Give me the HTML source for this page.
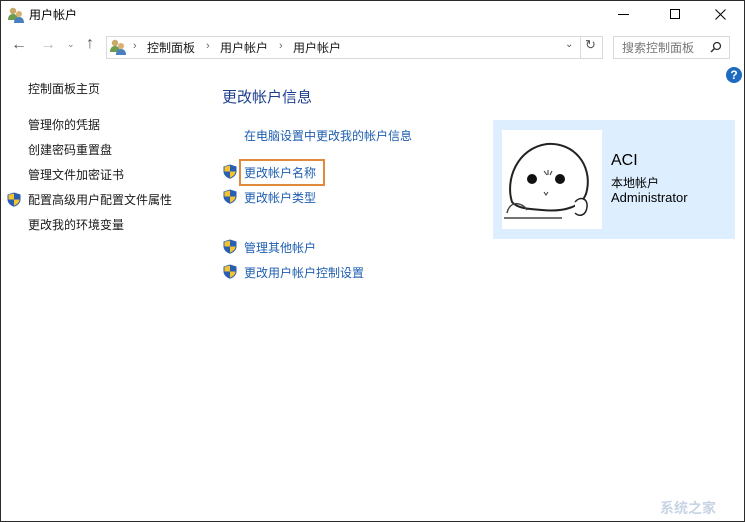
<!DOCTYPE html>
<html><head><meta charset="utf-8"><style>
*{margin:0;padding:0;box-sizing:border-box}
body{width:745px;height:522px;overflow:hidden;background:#fff;font-family:"Liberation Sans","Noto Sans CJK SC",sans-serif;position:relative}
.a{position:absolute;white-space:nowrap}
.lk{color:#1e5eb0;font-size:12px}
.nav{color:#1a1a1a;font-size:12px}
.sh{position:absolute;width:14px;height:15px}
</style></head><body>
<div class="a" style="left:0;top:0;width:745px;height:522px;border:1px solid #2b2b2b"></div>
<svg class="a" style="left:7px;top:6px" width="18" height="18" viewBox="0 0 18 18"><circle cx="6" cy="5" r="3.2" fill="#c9a86a"/><path d="M1 14c0-4 2-6 5-6s5 2 5 6z" fill="#6e9b4e"/><circle cx="12" cy="8" r="3" fill="#d8b070"/><path d="M7 17c0-4 2-6 5-6s5 2 5 6z" fill="#4a7fc0"/></svg>
<div class="a" style="left:29px;top:6px;font-size:12px;color:#000">用户帐户</div>
<div class="a" style="left:618px;top:14px;width:11px;height:1px;background:#000"></div>
<div class="a" style="left:670px;top:9px;width:10px;height:10px;border:1px solid #000"></div>
<svg class="a" style="left:715px;top:9px" width="11" height="11"><path d="M0.5 0.5L10.5 10.5M10.5 0.5L0.5 10.5" stroke="#000"/></svg>
<div class="a" style="left:11px;top:36px;font-size:16px;color:#555">←</div>
<div class="a" style="left:40px;top:36px;font-size:16px;color:#bbb">→</div>
<div class="a" style="left:67px;top:39px;font-size:9px;color:#777">⌄</div>
<div class="a" style="left:86px;top:35px;font-size:16px;color:#555">↑</div>
<div class="a" style="left:106px;top:36px;width:475px;height:23px;border:1px solid #d9d9d9"></div>
<div class="a" style="left:580px;top:36px;width:23px;height:23px;border:1px solid #d9d9d9"></div>
<div class="a" style="left:565px;top:39px;font-size:10px;color:#555">⌄</div>
<div class="a" style="left:585px;top:37px;font-size:13px;color:#555">↻</div>
<svg class="a" style="left:109px;top:38px" width="18" height="18" viewBox="0 0 18 18"><circle cx="6" cy="5" r="3.2" fill="#c9a86a"/><path d="M1 14c0-4 2-6 5-6s5 2 5 6z" fill="#6e9b4e"/><circle cx="12" cy="8" r="3" fill="#d8b070"/><path d="M7 17c0-4 2-6 5-6s5 2 5 6z" fill="#4a7fc0"/></svg>
<div class="a" style="left:133px;top:40px;font-size:11px;color:#666">›</div>
<div class="a nav" style="left:147px;top:39px">控制面板</div>
<div class="a" style="left:206px;top:40px;font-size:11px;color:#666">›</div>
<div class="a nav" style="left:220px;top:39px">用户帐户</div>
<div class="a" style="left:279px;top:40px;font-size:11px;color:#666">›</div>
<div class="a nav" style="left:293px;top:39px">用户帐户</div>
<div class="a" style="left:613px;top:36px;width:117px;height:23px;border:1px solid #d9d9d9"></div>
<div class="a" style="left:622px;top:39px;font-size:12px;color:#777">搜索控制面板</div>
<svg class="a" style="left:710px;top:41px" width="12" height="12"><circle cx="7" cy="5" r="3.5" fill="none" stroke="#333" stroke-width="1.3"/><path d="M4.5 7.5L1 11" stroke="#333" stroke-width="1.5"/></svg>
<div class="a" style="left:726px;top:67px;width:16px;height:16px;border-radius:50%;background:#1d6bc0;color:#fff;font-size:12px;font-weight:bold;text-align:center;line-height:16px">?</div>
<div class="a nav" style="left:28px;top:80px">控制面板主页</div>
<div class="a nav" style="left:28px;top:116px">管理你的凭据</div>
<div class="a nav" style="left:28px;top:141px">创建密码重置盘</div>
<div class="a nav" style="left:28px;top:166px">管理文件加密证书</div>
<div class="a nav" style="left:28px;top:191px">配置高级用户配置文件属性</div>
<div class="a nav" style="left:28px;top:216px">更改我的环境变量</div>
<div class="a" style="left:222px;top:86px;font-size:15px;color:#1e3f8f">更改帐户信息</div>
<div class="a lk" style="left:244px;top:127px">在电脑设置中更改我的帐户信息</div>
<div class="a" style="left:239px;top:159px;width:86px;height:27px;border:2px solid #e08a3c"></div>
<div class="a lk" style="left:244px;top:164px">更改帐户名称</div>
<div class="a lk" style="left:244px;top:189px">更改帐户类型</div>
<div class="a lk" style="left:244px;top:239px">管理其他帐户</div>
<div class="a lk" style="left:244px;top:264px">更改用户帐户控制设置</div>
<svg width="0" height="0" style="position:absolute"><defs><g id="s"><path d="M7 0.5L13.5 2.5V7.5C13.5 11 10.5 13.5 7 14.8C3.5 13.5 0.5 11 0.5 7.5V2.5Z" fill="#2a5eb0"/><path d="M7 1.5V7.5H1.5V2.8Z" fill="#f4c430"/><path d="M7 7.5H12.5C12.3 10.5 10 12.5 7 13.7Z" fill="#f4c430"/></g></defs></svg>
<svg class="sh" style="left:7px;top:192px" viewBox="0 0 14 15"><use href="#s"/></svg>
<svg class="sh" style="left:223px;top:164px" viewBox="0 0 14 15"><use href="#s"/></svg>
<svg class="sh" style="left:223px;top:189px" viewBox="0 0 14 15"><use href="#s"/></svg>
<svg class="sh" style="left:223px;top:239px" viewBox="0 0 14 15"><use href="#s"/></svg>
<svg class="sh" style="left:223px;top:264px" viewBox="0 0 14 15"><use href="#s"/></svg>
<div class="a" style="left:493px;top:120px;width:242px;height:119px;background:#ddeeff"></div>
<div class="a" style="left:502px;top:130px;width:100px;height:99px;background:#fff"></div>
<svg class="a" style="left:502px;top:130px" width="100" height="99" viewBox="0 0 100 99"><path d="M10 72C3 50 15 18 45 14C72 12 90 35 85 60C82 78 60 82 40 80C25 79 15 78 10 72Z" fill="none" stroke="#222" stroke-width="2"/><path d="M5 83C8 70 20 72 25 80M2 88H60" fill="none" stroke="#444" stroke-width="1.5"/><circle cx="30" cy="49" r="5" fill="#111"/><circle cx="58" cy="49" r="5" fill="#111"/><path d="M73 72c5-6 13-4 12 5s-8 10-12 6" fill="#fff" stroke="#222" stroke-width="1.5"/><path d="M42 41l3 4M46 40l0 5M50 41l-2 4" stroke="#333"/><path d="M42 62l2 3 2-3" stroke="#333" fill="none"/></svg>
<div class="a" style="left:611px;top:152px;font-size:16px;color:#000">ACI</div>
<div class="a" style="left:611px;top:174px;font-size:12px;color:#000">本地帐户</div>
<div class="a" style="left:611px;top:190px;font-size:13px;color:#000">Administrator</div>
<div class="a" style="left:660px;top:498px;font-size:14px;color:#c8d4e4;font-weight:bold">系统之家</div>
</body></html>
